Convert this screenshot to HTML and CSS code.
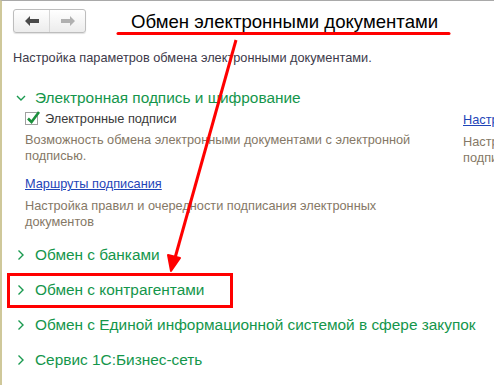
FILE: index.html
```html
<!DOCTYPE html>
<html lang="ru">
<head>
<meta charset="utf-8">
<link rel="stylesheet" href="styles.css">
</head>
<body>
<div class="frame">
  <div class="header">
    <div class="nav">
      <button class="nav-btn back" aria-label="Назад">
        <svg width="16" height="12" viewBox="0 0 16 12"><path d="M1 6 L6 1 L6 4 L15 4 L15 8 L6 8 L6 11 Z" fill="#4a4a4a"/></svg>
      </button>
      <button class="nav-btn fwd" aria-label="Вперёд">
        <svg width="16" height="12" viewBox="0 0 16 12"><path d="M15 6 L10 1 L10 4 L1 4 L1 8 L10 8 L10 11 Z" fill="#b0b0b0"/></svg>
      </button>
    </div>
    <h1 class="title">Обмен электронными документами</h1>
  </div>
  <p class="intro">Настройка параметров обмена электронными документами.</p>

  <div class="group open">
    <div class="group-head">
      <svg class="chev" width="12" height="12" viewBox="0 0 12 12"><path d="M2 4 L6 8 L10 4" fill="none" stroke="#1a9a50" stroke-width="1.4"/></svg>
      <span>Электронная подпись и шифрование</span>
    </div>
    <div class="group-body">
      <div class="col main">
        <label class="check">
          <span class="box"><svg class="tick" width="16" height="16" viewBox="0 0 16 16"><path d="M3 8.5 L6.5 12 L14 2" fill="none" stroke="#1b8f3c" stroke-width="2.6"/></svg></span>
          <span>Электронные подписи</span>
        </label>
        <p class="hint">Возможность обмена электронными документами с электронной подписью.</p>
        <a class="link" href="#">Маршруты подписания</a>
        <p class="hint after-link">Настройка правил и очередности подписания электронных документов</p>
      </div>
      <div class="col side">
        <a class="link" href="#">Настройки</a>
        <p class="hint side-hint">Настройки электронной подписи и шифрования</p>
      </div>
    </div>
  </div>

  <div class="group">
    <div class="group-head">
      <svg class="chev" width="12" height="12" viewBox="0 0 12 12"><path d="M3.5 1.5 L8 6 L3.5 10.5" fill="none" stroke="#1a9a50" stroke-width="1.4"/></svg>
      <span>Обмен с банками</span>
    </div>
  </div>
  <div class="group">
    <div class="group-head">
      <svg class="chev" width="12" height="12" viewBox="0 0 12 12"><path d="M3.5 1.5 L8 6 L3.5 10.5" fill="none" stroke="#1a9a50" stroke-width="1.4"/></svg>
      <span>Обмен с контрагентами</span>
    </div>
  </div>
  <div class="group">
    <div class="group-head">
      <svg class="chev" width="12" height="12" viewBox="0 0 12 12"><path d="M3.5 1.5 L8 6 L3.5 10.5" fill="none" stroke="#1a9a50" stroke-width="1.4"/></svg>
      <span>Обмен с Единой информационной системой в сфере закупок</span>
    </div>
  </div>
  <div class="group">
    <div class="group-head">
      <svg class="chev" width="12" height="12" viewBox="0 0 12 12"><path d="M3.5 1.5 L8 6 L3.5 10.5" fill="none" stroke="#1a9a50" stroke-width="1.4"/></svg>
      <span>Сервис 1С:Бизнес-сеть</span>
    </div>
  </div>

  <svg class="annot" width="494" height="385" viewBox="0 0 494 385">
    <line x1="118" y1="33.5" x2="449" y2="33.5" stroke="#ff0000" stroke-width="3" stroke-linecap="round"/>
    <line x1="236" y1="40" x2="175" y2="258" stroke="#ff0000" stroke-width="3"/>
    <path d="M171 271 L168 255 L180 258 Z" fill="#ff0000" stroke="#ff0000" stroke-width="2" stroke-linejoin="round"/>
    <rect x="8.5" y="274.5" width="223" height="32" fill="none" stroke="#ff0000" stroke-width="3"/>
  </svg>
</div>
</body>
</html>
```
FILE: styles.css
```css
* { box-sizing: border-box; }
html, body { margin: 0; padding: 0; background: #fff; }
body {
  font-family: "Liberation Sans", Arial, sans-serif;
  width: 494px;
  height: 385px;
  overflow: hidden;
}
.frame {
  position: relative;
  width: 494px;
  height: 385px;
  overflow: hidden;
  border-top: 1px solid #a9a9a9;
  border-left: 2px solid #cfc89a;
  padding: 8px 0 0 11px;
}
.header {
  display: flex;
  align-items: center;
  height: 24px;
}
.nav {
  display: flex;
  width: 73px;
  height: 24px;
  border: 1px solid #bdbdbd;
  border-radius: 3px;
  background: linear-gradient(#ffffff, #ececec);
  box-shadow: 0 1px 1px rgba(0,0,0,0.12);
}
.nav-btn {
  flex: 1;
  border: 0;
  background: transparent;
  padding: 0;
  display: flex;
  align-items: center;
  justify-content: center;
}
.nav-btn.back { border-right: 1px solid #d6d6d6; }
.title {
  margin: 0 0 0 45px;
  font-size: 18.6px;
  font-weight: normal;
  color: #000;
  line-height: 24px;
  padding-top: 2px;
  white-space: nowrap;
}
.intro {
  margin: 17px 0 0 0;
  font-size: 12.75px;
  color: #3d3a4a;
  line-height: 16px;
  white-space: nowrap;
}
.group-head {
  display: flex;
  align-items: center;
  gap: 8px;
  color: #14964b;
  font-size: 15.4px;
  line-height: 20px;
  padding-left: 2px;
  white-space: nowrap;
}
.chev { flex: none; }
.group { margin-top: 15px; }
.group.open { margin-top: 22px; }
.group-body {
  display: flex;
  padding-left: 12px;
}
.col.main { width: 438px; flex: none; }
.col.side { flex: none; width: 160px; padding-top: 2px; }
.check {
  display: flex;
  align-items: center;
  gap: 7px;
  font-size: 12.75px;
  color: #3a3a3a;
  height: 20px;
}
.box {
  position: relative;
  width: 13px;
  height: 13px;
  border: 1px solid #a0a0a0;
  background: #fff;
  flex: none;
}
.tick {
  position: absolute;
  left: -1px;
  top: -3px;
}
.hint {
  margin: 4px 0 0 0;
  font-size: 12.75px;
  line-height: 16px;
  color: #857866;
  width: 400px;
}
.hint.after-link { margin-top: 6px; }
.hint.side-hint { width: 150px; margin-top: 6px; }
.link {
  display: inline-block;
  margin-top: 12px;
  font-size: 12.75px;
  line-height: 16px;
  color: #1f45b8;
  text-decoration: underline;
  white-space: nowrap;
}
.side .link { margin-top: 0; }
.annot {
  position: absolute;
  left: -2px;
  top: -1px;
  pointer-events: none;
}
```
